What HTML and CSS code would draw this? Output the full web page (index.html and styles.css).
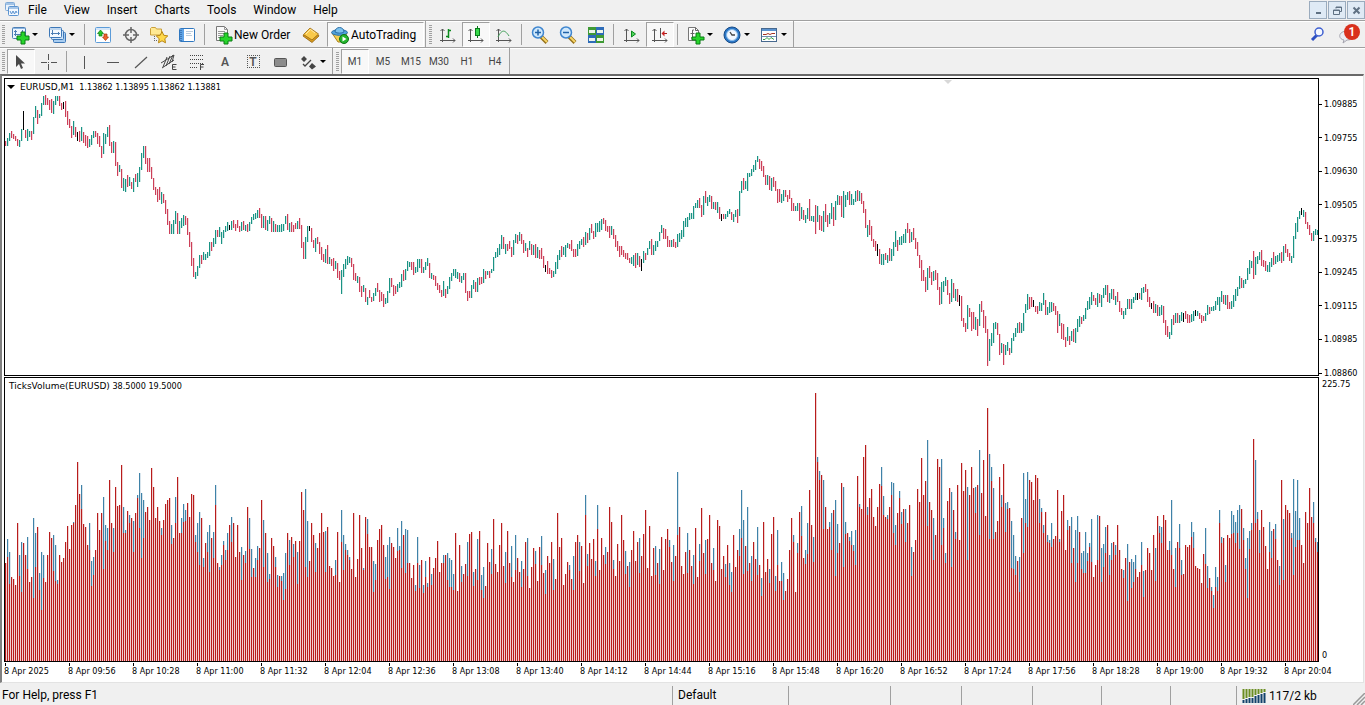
FILE: index.html
```html
<!DOCTYPE html>
<html lang="en">
<head>
  <meta charset="utf-8">
  <title>EURUSD,M1</title>
  <link rel="stylesheet" href="styles.css">
</head>
<body>
  <header class="menubar">
    <svg class="app-icon" width="16" height="16" viewBox="0 0 16 16"><rect x="1.500" y="1.500" width="9" height="8" rx="1" fill="#eaf3fc" stroke="#7fa9d6"/><path d="M2 3h8" stroke="#5b93d0"/><rect x="4.500" y="5.500" width="10" height="9" rx="1" fill="#f4f9ff" stroke="#5b93d0"/><path d="M5 7h9" stroke="#5b93d0"/><path d="M6 10l1.500 3 1.500-3 1.500 3 1.500-3 1 2" fill="none" stroke="#5b93d0"/></svg>
    <nav class="menu">
      <a href="#">File</a>
      <a href="#">View</a>
      <a href="#">Insert</a>
      <a href="#">Charts</a>
      <a href="#">Tools</a>
      <a href="#">Window</a>
      <a href="#">Help</a>
    </nav>
    <div class="window-buttons">
      <button aria-label="Minimize"><svg width="11" height="11" viewBox="0 0 11 11"><path d="M3 8h5" stroke="#5f7183" stroke-width="2"/></svg></button>
      <button aria-label="Restore"><svg width="11" height="11" viewBox="0 0 11 11"><path d="M4 3.500V2h5.500v4.500H8M4 2.500h5.500" fill="none" stroke="#5f7183"/><path d="M1.500 5h6v4.500h-6zM1.500 5.500h6" fill="none" stroke="#5f7183"/></svg></button>
      <button aria-label="Close"><svg width="11" height="11" viewBox="0 0 11 11"><path d="M2.500 2.500l6 6M8.500 2.500l-6 6" stroke="#5f7183" stroke-width="2"/></svg></button>
    </div>
  </header>

  <div class="toolrow">
    <div class="toolbar">
      <span class="grip"></span>
      <button class="drop" aria-label="New chart"><svg width="20" height="20" viewBox="0 0 20 20"><rect x="2.500" y="2.500" width="13" height="11" rx="1" fill="#eef6ff" stroke="#4d7fb5"/><path d="M3 3.500h12" stroke="#8ab4e0"/><path d="M5.500 5v6M4 6.500h3M4 9.500h10M12.500 5v3" stroke="#4d7fb5"/><path d="M11 7h4v4h4v4h-4v4h-4v-4H7v-4h4z" fill="#27d52b" stroke="#0b7d14"/></svg></button>
      <button class="drop" aria-label="Profiles"><svg width="20" height="20" viewBox="0 0 20 20"><rect x="6.500" y="7.500" width="12" height="10" rx="1" fill="#a9cdf0" stroke="#3d78b8"/><rect x="4.500" y="5.500" width="12" height="9" rx="1" fill="#cfe4f8" stroke="#3d78b8"/><rect x="2.500" y="2.500" width="12" height="10" rx="1" fill="#f4faff" stroke="#3d78b8"/><path d="M3 4h11" stroke="#8ab4e0"/><path d="M5.500 5v5M4 8.500h9M11.500 7v3" stroke="#4d7fb5"/></svg></button>
      <span class="sep"></span>
      <button class="tool" aria-label="Market Watch"><svg width="20" height="20" viewBox="0 0 20 20"><rect x="2.500" y="2.500" width="15" height="15" rx="1" fill="#fff" stroke="#5b9bd8"/><path d="M3 4h14" stroke="#a9cdf0"/><path d="M7.500 5l3 3.500H9V11H6V8.500H4.500z" fill="#27c52b" stroke="#0b7d14" stroke-width=".7"/><path d="M12.500 15.500l-3-3.500H11V9h3v3h1.500z" fill="#f0642d" stroke="#a8330a" stroke-width=".7"/></svg></button>
      <button class="tool" aria-label="Data Window"><svg width="20" height="20" viewBox="0 0 20 20"><circle cx="10" cy="10" r="5.500" fill="none" stroke="#666" stroke-width="1.500"/><path d="M10 2v6M10 12v6M2 10h6M12 10h6" stroke="#666" stroke-width="1.500"/></svg></button>
      <button class="tool" aria-label="Navigator"><svg width="20" height="20" viewBox="0 0 20 20"><path d="M1.500 3.500l1-1h4l1 1.500h5v6h-11z" fill="#ffe994" stroke="#caa03a"/><path d="M5.500 11v6M5 15.500h4" stroke="#666" stroke-dasharray="1 1"/><path d="M13 6.500l1.800 3.800 4 .6-3 2.800.7 4.100-3.500-2-3.500 2 .7-4.100-3-2.800 4-.6z" fill="#ffd84a" stroke="#b98612"/></svg></button>
      <button class="tool" aria-label="Terminal"><svg width="20" height="20" viewBox="0 0 20 20"><rect x="2.500" y="3.500" width="15" height="13" rx="1" fill="#fff" stroke="#2f77c0"/><rect x="3" y="4" width="4" height="12" fill="#5fa3e6"/><path d="M4 5v11" stroke="#1d4f8a" stroke-dasharray="1 1"/><path d="M9 6.500h7M9 8.500h5M9 10.500h6" stroke="#bcd" /></svg></button>
      <span class="sep"></span>
      <button class="wide order"><svg width="20" height="20" viewBox="0 0 20 20"><path d="M3.500 1.500h8l3 3v11h-11z" fill="#fafafa" stroke="#777"/><path d="M11.500 1.500v3h3M5 6.500h7M5 8.500h8M5 10.500h5M5 12.500h3" fill="none" stroke="#999"/><path d="M11 8h4v4h4v4h-4v3h-4v-3H7v-4h4z" fill="#27d52b" stroke="#0b7d14"/></svg>New Order</button>
      <button class="tool" aria-label="MetaEditor"><svg width="20" height="20" viewBox="0 0 20 20"><path d="M2 11l9 6.500L18 11l-1-1.500-6 5-8-5z" fill="#d99b1c" stroke="#8f5f0a" stroke-width=".8"/><path d="M2.500 9.500L9 3l8.500 6-6.500 6z" fill="#f9c94a" stroke="#9a6a10" stroke-width=".8"/><path d="M5 9l4.500-4.500L14 8" fill="none" stroke="#ffe9a8"/></svg></button>
      <button class="wide auto pressed"><svg width="20" height="20" viewBox="0 0 20 20"><path d="M2 8h15l-5 9H8z" fill="#f5cf52" stroke="#a98218"/><ellipse cx="9.500" cy="7.500" rx="8" ry="2.800" fill="#4fa2dc" stroke="#2a6ea5"/><path d="M5 7c0-6 9-6 9 0-2 1.500-7 1.500-9 0z" fill="#7cc2ee" stroke="#2a6ea5"/><circle cx="14" cy="14" r="4.500" fill="#24b52c" stroke="#0c7414"/><path d="M12.500 11.500l4 2.500-4 2.500z" fill="#fff"/></svg>AutoTrading</button>
    </div>
    <div class="toolbar">
      <span class="grip"></span>
      <button class="tool" aria-label="Bar Chart"><svg width="20" height="20" viewBox="0 0 20 20"><path d="M4.500 4v13M2 15.500h15M2.500 6l2-2 2 2M15 13.500l2 2-2 2" fill="none" stroke="#555"/><path d="M10.500 4v9M8 11.500h2M11 5.500h2" stroke="#0a8a1c" stroke-width="1.500"/></svg></button>
      <button class="tool pressed" aria-label="Candlesticks"><svg width="20" height="20" viewBox="0 0 20 20"><path d="M4.500 4v13M2 15.500h15M2.500 6l2-2 2 2M15 13.500l2 2-2 2" fill="none" stroke="#555"/><path d="M11.500 1v12" stroke="#0a7a1c"/><rect x="9.500" y="3.500" width="4" height="7" fill="#35d948" stroke="#0a7a1c"/></svg></button>
      <button class="tool" aria-label="Line Chart"><svg width="20" height="20" viewBox="0 0 20 20"><path d="M4.500 4v13M2 15.500h15M2.500 6l2-2 2 2M15 13.500l2 2-2 2" fill="none" stroke="#555"/><path d="M4 12c3-6 6-9 11-1" fill="none" stroke="#3f9e56"/></svg></button>
      <span class="sep"></span>
      <button class="tool" aria-label="Zoom In"><svg width="20" height="20" viewBox="0 0 20 20"><path d="M11 11.500l6 6" stroke="#94701a" stroke-width="4"/><path d="M12 12l5 5" stroke="#f7d566" stroke-width="2"/><circle cx="8" cy="7.500" r="5.500" fill="#cfe8fc" stroke="#3f86cf" stroke-width="1.500"/><path d="M5 7.500h6M8 4.500v6" stroke="#2063a8" stroke-width="1.500"/></svg></button>
      <button class="tool" aria-label="Zoom Out"><svg width="20" height="20" viewBox="0 0 20 20"><path d="M11 11.500l6 6" stroke="#94701a" stroke-width="4"/><path d="M12 12l5 5" stroke="#f7d566" stroke-width="2"/><circle cx="8" cy="7.500" r="5.500" fill="#cfe8fc" stroke="#3f86cf" stroke-width="1.500"/><path d="M5 7.500h6" stroke="#2063a8" stroke-width="1.500"/></svg></button>
      <button class="tool" aria-label="Tile Windows"><svg width="20" height="20" viewBox="0 0 20 20"><rect x="2" y="2" width="8" height="8" fill="#3f9a35"/><rect x="10" y="2" width="8" height="8" fill="#2e6cb8"/><rect x="2" y="10" width="8" height="8" fill="#2e6cb8"/><rect x="10" y="10" width="8" height="8" fill="#3f9a35"/><path d="M3 6.500h6M11 6.500h6M3 14.500h6M11 14.500h6" stroke="#eef6ea" stroke-width="3"/></svg></button>
      <span class="sep"></span>
      <button class="tool" aria-label="Auto Scroll"><svg width="20" height="20" viewBox="0 0 20 20"><path d="M4.500 4v13M2 15.500h15M2.500 6l2-2 2 2M15 13.500l2 2-2 2" fill="none" stroke="#555"/><path d="M9.500 6l4 3-4 3z" fill="#4fd35c" stroke="#0a8a1c"/></svg></button>
      <button class="tool pressed" aria-label="Chart Shift"><svg width="20" height="20" viewBox="0 0 20 20"><path d="M4.500 4v13M2 15.500h15M2.500 6l2-2 2 2M15 13.500l2 2-2 2M10.500 3v10" fill="none" stroke="#555"/><path d="M17 8.500h-4" stroke="#a81c1c"/><path d="M11.500 8.500l3-3v6z" fill="#c22"/></svg></button>
      <span class="sep"></span>
      <button class="drop" aria-label="Indicators"><svg width="20" height="20" viewBox="0 0 20 20"><path d="M3.500 2.500h7l3 3v10h-10z" fill="#fdfdfd" stroke="#777"/><path d="M10.500 2.500v3h3M9 5H7.500v8H6M5.500 8.500h4" fill="none" stroke="#666"/><path d="M11 8h4v4h4v3h-4v4h-4v-4H7v-3h4z" fill="#27d52b" stroke="#0b7d14"/></svg></button>
      <button class="drop" aria-label="Periods"><svg width="20" height="20" viewBox="0 0 20 20"><circle cx="10" cy="10" r="8" fill="#2c78c8" stroke="#174b86"/><circle cx="10" cy="10" r="5.500" fill="#f2f8ff" stroke="#8bbdea"/><path d="M8 7l2 3h3" fill="none" stroke="#444" stroke-width="1.300"/></svg></button>
      <button class="drop" aria-label="Templates"><svg width="20" height="20" viewBox="0 0 20 20"><rect x="2.500" y="3.500" width="15" height="13" fill="#fff" stroke="#47698f"/><path d="M3 5h14" stroke="#5b93d0" stroke-width="2"/><path d="M4 9.500h3l2-1 2 1 2-1h3" fill="none" stroke="#a33222"/><path d="M3 11.500h14" stroke="#6f8db0"/><path d="M4 14.500h2l2-2 2 2 2-2 3 2" fill="none" stroke="#2e9e46"/></svg></button>
    </div>
    <div class="corner">
      <button class="tool" aria-label="Search"><svg width="16" height="16" viewBox="0 0 16 16"><path d="M7 9l-5 5" stroke="#2d4fc2" stroke-width="3"/><circle cx="9" cy="6" r="4" fill="#f4f8ff" stroke="#3f5fd0" stroke-width="1.500"/></svg></button>
      <button class="notify" aria-label="Notifications"><svg width="22" height="20" viewBox="0 0 22 20"><path d="M8 7c-8 1-8 8-2 9l-1 3 4-3c6 0 8-3 7-6z" fill="#ececf2" stroke="#a4a4ae"/></svg><span class="badge">1</span></button>
    </div>
  </div>

  <div class="toolrow">
    <div class="toolbar">
      <span class="grip"></span>
      <button class="tool pressed" aria-label="Cursor"><svg width="20" height="20" viewBox="0 0 20 20"><path d="M5 3v12l3-3 2 5 2-1-2-4.500h4z" fill="#4a4a4a"/></svg></button>
      <button class="tool" aria-label="Crosshair"><svg width="20" height="20" viewBox="0 0 20 20"><path d="M9.500 2v6M9.500 12v6M2 10.500h6M12 10.500h6M9 10.500h1" stroke="#555"/></svg></button>
      <span class="sep"></span>
      <button class="tool" aria-label="Vertical Line"><svg width="20" height="20" viewBox="0 0 20 20"><path d="M9.500 4v13" stroke="#555"/></svg></button>
      <button class="tool" aria-label="Horizontal Line"><svg width="20" height="20" viewBox="0 0 20 20"><path d="M4 10.500h12" stroke="#555"/></svg></button>
      <button class="tool" aria-label="Trendline"><svg width="20" height="20" viewBox="0 0 20 20"><path d="M4 16L16 5" stroke="#555" stroke-width="1.200"/></svg></button>
      <button class="tool" aria-label="Equidistant Channel"><svg width="20" height="20" viewBox="0 0 20 20"><path d="M2 11L15 3M3 16L15 8M4 15L8 5M7 14l4-10M10 12l4-9M13 10l2-7" stroke="#444"/><path d="M17.500 12.500h-4v5h4M13.500 15h3" fill="none" stroke="#444"/></svg></button>
      <button class="tool" aria-label="Fibonacci Retracement"><svg width="20" height="20" viewBox="0 0 20 20"><path d="M3 3.500h13M3 7.500h13M3 11.500h13M3 15.500h8" stroke="#444" stroke-dasharray="1 1"/><path d="M17 12.500h-3.500V18M13.500 15h3" fill="none" stroke="#444"/></svg></button>
      <button class="tool glyph" aria-label="Text">A</button>
      <button class="tool glyph" aria-label="Text Label"><span class="boxed">T</span></button>
      <button class="tool" aria-label="Rectangle"><svg width="20" height="20" viewBox="0 0 20 20"><rect x="3.500" y="6.500" width="12" height="8" rx="1" fill="#8c8c8c" stroke="#555"/></svg></button>
      <button class="drop" aria-label="Arrows"><svg width="20" height="20" viewBox="0 0 20 20"><path d="M6 4l3 3-3 3-3-3zM14 11l4 3.500-4 3-3-3z" fill="#444"/><path d="M5 12l2 2 6-6" fill="none" stroke="#444" stroke-width="1.300"/></svg></button>
    </div>
    <div class="toolbar frames">
      <span class="grip"></span>
      <button class="tool pressed">M1</button>
      <button class="tool">M5</button>
      <button class="tool">M15</button>
      <button class="tool">M30</button>
      <button class="tool">H1</button>
      <button class="tool">H4</button>
    </div>
  </div>

  <main class="chart">
    <section class="pane price">
      <h1 class="caption"><span class="arrow"></span><span class="name">EURUSD,M1</span>&nbsp; 1.13862 1.13895 1.13862 1.13881</h1>
      <span class="shift-mark"></span>
      <svg class="plot" viewBox="0 0 1313 296" preserveAspectRatio="none">
        <g class="glow">
          <use href="#up" x="1"/>
          <use href="#down" x="1"/>
        </g>
        <path id="up" class="up"/>
        <path id="down" class="down"/>
        <path id="flat" class="flat"/>
      </svg>
    </section>
    <ul class="scale prices">
      <li>1.09885</li>
      <li>1.09755</li>
      <li>1.09630</li>
      <li>1.09505</li>
      <li>1.09375</li>
      <li>1.09245</li>
      <li>1.09115</li>
      <li>1.08985</li>
      <li>1.08860</li>
    </ul>
    <section class="pane volume">
      <h2 class="caption"><span class="name">TicksVolume(EURUSD)</span>&nbsp;38.5000 19.5000</h2>
      <svg class="plot" viewBox="0 0 1313 283" preserveAspectRatio="none">
        <g class="glow">
          <use href="#total" x="1"/>
          <use href="#ticks" x="1"/>
        </g>
        <path id="total" class="total"/>
        <path id="ticks" class="ticks"/>
      </svg>
    </section>
    <ul class="scale volumes">
      <li>225.75</li>
      <li>0</li>
    </ul>
    <ul class="times">
      <li>8 Apr 2025</li>
      <li>8 Apr 09:56</li>
      <li>8 Apr 10:28</li>
      <li>8 Apr 11:00</li>
      <li>8 Apr 11:32</li>
      <li>8 Apr 12:04</li>
      <li>8 Apr 12:36</li>
      <li>8 Apr 13:08</li>
      <li>8 Apr 13:40</li>
      <li>8 Apr 14:12</li>
      <li>8 Apr 14:44</li>
      <li>8 Apr 15:16</li>
      <li>8 Apr 15:48</li>
      <li>8 Apr 16:20</li>
      <li>8 Apr 16:52</li>
      <li>8 Apr 17:24</li>
      <li>8 Apr 17:56</li>
      <li>8 Apr 18:28</li>
      <li>8 Apr 19:00</li>
      <li>8 Apr 19:32</li>
      <li>8 Apr 20:04</li>
    </ul>
  </main>

  <footer class="statusbar">
    <span class="help">For Help, press F1</span>
    <span>Default</span>
    <span></span>
    <span></span>
    <span></span>
    <span></span>
    <span></span>
    <span></span>
    <span class="traffic"><svg width="24" height="14" viewBox="0 0 24 14"><path d="M1.500 0v10M4.500 0v9M7.500 0v8M10.500 0v8M13.500 0v6M16.500 0v5M19.500 0v4M22.500 0v3" stroke="#6b8e23" stroke-width="2"/><path d="M1.500 11v3M4.500 10v4M7.500 9v5M10.500 9v5M13.500 7v7M16.500 6v8M19.500 5v9M22.500 4v10" stroke="#12426b" stroke-width="2"/></svg>117/2 kb
      <svg class="resize" width="12" height="12" viewBox="0 0 12 12"><path d="M0 12L12 0M4 12l8-8M8 12l4-4" stroke="#999" stroke-width="1.500"/></svg></span>
  </footer>

  <script src="chart.js"></script>
</body>
</html>
```

FILE: styles.css
```css
* {
  box-sizing: border-box;
}
body {
  margin: 0;
  height: 100vh;
  display: flex;
  flex-direction: column;
  overflow: hidden;
  background-color: #f0f0f0;
  color: #000;
  font-family: Roboto, "Open Sans", sans-serif;
  font-size: 12px;
}
h1, h2, ul {
  margin: 0;
  padding: 0;
  font-weight: normal;
  list-style: none;
}
button {
  margin: 0;
  padding: 0;
  border: 0;
  background: none;
  color: inherit;
  font: inherit;
}
svg {
  display: block;
  flex: none;
}

/* menu */
.menubar {
  display: flex;
  align-items: center;
  height: 20px;
  padding-left: 4px;
}
.menu {
  display: flex;
  flex: 1;
}
.menu a {
  padding: 0 9px 0 8px;
  line-height: 20px;
  color: #000;
  text-decoration: none;
}
.app-icon {
  margin-bottom: 2px;
}
.window-buttons {
  display: flex;
  gap: 1px;
}
.window-buttons button {
  display: grid;
  place-items: center;
  width: 18px;
  height: 18px;
  border: 1px solid #9aabbd;
  background-color: #dfeaf5;
}

/* toolbars */
.toolrow {
  display: flex;
  height: 27px;
  border-top: 1px solid #a0a0a0;
  box-shadow: inset 0 1px #fff;
}
.toolbar {
  display: flex;
  align-items: stretch;
  padding-top: 1px;
  border-right: 1px solid #a0a0a0;
}
.grip {
  width: 3px;
  margin: 3px 2px 3px 3px;
  background: repeating-linear-gradient(#a0a0a0 0 1px, #f0f0f0 1px 2px);
}
.toolbar:first-child .grip {
  margin-left: 2px;
}
.sep {
  width: 8px;
  padding: 2px 0;
}
.sep::before {
  content: "";
  display: block;
  width: 1px;
  height: 100%;
  margin-left: 3px;
  background-color: #a0a0a0;
}
.tool, .drop, .wide {
  display: flex;
  align-items: center;
  justify-content: center;
  width: 28px;
}
.drop {
  justify-content: flex-start;
  width: 37px;
  gap: 2px;
  padding-left: 3px;
}
.drop::after {
  content: "";
  border: 3px solid transparent;
  border-top-color: #000;
  border-bottom: 0;
}
.pressed {
  border: 1px solid #fff;
  border-top-color: #a0a0a0;
  border-left-color: #a0a0a0;
  background-color: #f8f8f8;
}
.wide {
  justify-content: flex-start;
  gap: 1px;
}
.order {
  width: 88px;
  padding-left: 4px;
}
.auto {
  width: 97px;
  margin: 0 1px 0 2px;
  padding-left: 2px;
}
.glyph {
  color: #555;
  font-weight: 600;
}
.boxed {
  width: 13px;
  height: 13px;
  border: 1px dotted #555;
  line-height: 12px;
}
.frames {
  color: #444;
  font-size: 10px;
}
.corner {
  display: flex;
  align-items: center;
  margin-left: auto;
  padding-right: 5px;
}
.notify {
  position: relative;
  margin-left: 6px;
}
.badge {
  position: absolute;
  top: 0;
  right: 0;
  width: 16px;
  height: 16px;
  border-radius: 50%;
  background-color: #d9301c;
  color: #fff;
  font-weight: 600;
  line-height: 16px;
  text-align: center;
}

/* chart window */
.chart {
  flex: 1;
  display: grid;
  grid-template-columns: 1fr 44px;
  grid-template-rows: 298fr 285fr 19px;
  row-gap: 1px;
  min-height: 0;
  margin-right: 1px;
  padding: 2px 0 0 2px;
  border-top: 2px solid #696969;
  border-left: 2px solid #808080;
  border-bottom: 1px solid #e3e3e3;
  border-right: 1px solid #e3e3e3;
  background-color: #fff;
  font-family: "DejaVu Sans Condensed", "DejaVu Sans", sans-serif;
  font-size: 9px;
}
.pane {
  position: relative;
  min-height: 0;
  border: 1px solid #000;
}
.plot {
  width: 100%;
  height: 100%;
  shape-rendering: crispEdges;
}
.up {
  fill: #1a9384;
}
.down {
  fill: #cc3f58;
}
.flat {
  fill: #000;
}
.total {
  fill: #3f82a8;
}
.ticks {
  fill: #b81c1c;
}
.glow {
  opacity: 0.2;
}
.caption {
  position: absolute;
  top: 2px;
  left: 4px;
  display: flex;
  align-items: center;
  font-size: 9px;
  line-height: 12px;
}
.name {
  font-family: "DejaVu Sans", sans-serif;
}
.arrow {
  margin: 0 5px 0 -2px;
  border: 4px solid transparent;
  border-top-color: #000;
  border-bottom: 0;
}
.shift-mark {
  position: absolute;
  top: 1px;
  left: 72%;
  margin-left: -6px;
  border: 4px solid transparent;
  border-top-color: #d8d8d8;
  border-bottom: 0;
}
.scale {
  display: flex;
  flex-direction: column;
  justify-content: space-between;
  line-height: 6px;
}
.prices {
  padding-top: 23px;
}
.prices li {
  display: flex;
  align-items: center;
  gap: 2px;
}
.prices li::before {
  content: "";
  width: 3px;
  height: 1px;
  background-color: #000;
}
.volumes {
  padding: 4px 0 4px 3px;
}
.times {
  display: flex;
  min-width: 0;
  white-space: nowrap;
}
.times li {
  flex: 0 0 calc(100% * 64 / 1315);
  line-height: 11px;
}
.times li::before {
  content: "";
  display: block;
  width: 1px;
  height: 3px;
  margin-left: 1px;
  background-color: #000;
}

/* status bar */
.statusbar {
  display: grid;
  grid-template-columns: 1fr 116px 102px 71px 71px 69px 69px 66px 129px;
  height: 22px;
  padding-top: 3px;
  line-height: 18px;
}
.statusbar > span {
  padding-left: 5px;
  border-left: 1px solid #a0a0a0;
}
.statusbar .help {
  padding-left: 2px;
  border-left: 0;
}
.traffic {
  display: flex;
  align-items: center;
  gap: 3px;
}
.resize {
  align-self: flex-end;
  margin-left: auto;
}
```

FILE: chart.js
```js
// one entry per minute: top, direction (u/d/n), bottom
const bars = `
141d146 138u146 133u141 131d138 134d139 136d141 139d146 140u147 129u141 111n130
130d138 129u141 131u137 131d140 117u134 106u118 110d124 114u118 103u116 96u105
95d105 98d105 100d110 99d113 101u114 96u105 96u101 96d106 103d110 102n109
101d117 111d125 119d128 126d138 121u135 127d137 132n141 131d142 127u141 132d143
135d146 136d148 139u147 135u145 131u138 131d137 133d144 136d147 146d158 133u154
134u144 127u137 125d146 142d153 141u153 142d166 162d176 165u172 169d188 178u191
179u192 175d187 177u186 182d189 178u192 174d182 173u187 167u182 153u170 146u158
146d164 158d172 158d172 167d179 178d190 187d195 189d202 187d200 192u204 194d203
200d214 209d225 221d234 224u234 220u234 211u224 213d234 221u234 218u228 215u226
216d225 218d235 232d247 242d266 258d277 272u279 266u276 255u268 255d264 252u260
254u260 252u258 242u256 242d251 238u247 230u244 230d237 227u237 232u244 230u238
226u232 222u231 225n230 221u230 220d228 224d231 220d228 226d232 222u231 221d230
225u231 224d232 222u231 217u224 214u220 213u219 210u218 208d218 214d228 216u228
216d230 220u231 216u224 218d232 221u232 224d232 225u232 225u232 224u232 224u231
216u224 214d230 223u232 222d232 225d232 223d229 221u229 218d229 225d248 242d259
237u259 226u242 226n231 228d242 240d248 238u252 237d244 242d254 247d260 254d262
249u263 245d264 257u264 259d266 258d271 261u269 263d278 271d280 270u294 264u277
259u269 256u265 257u263 258d267 264d280 273d281 276u283 277d292 286d297 285u292
288d302 297u305 290d298 297d302 293u301 288u296 283d292 290d302 292d301 294d307
298u304 291u303 278u293 278d287 285d296 286d294 284u292 282u288 274u287 270d281
269u280 261u271 262u267 262d270 262d275 267u273 259u272 259u268 259d273 267u273
262u270 258u266 263d278 273u279 275d280 276d286 283d290 285d293 290d297 281u296
289d298 286u294 277u289 273u281 269u276 269u278 272u279 273d282 276u283 273u280
273d293 291d301 291d298 285u298 280u289 282d292 278u292 277d285 277d284 269u283
271d279 271u275 271d278 269u273 257u271 252u258 248u257 244u255 235u249 237d249
244u254 244d251 241d249 247d257 240u255 234u243 235d244 232u241 234d244 240d253
243u251 248d257 241u250 244d255 245u255 244d258 247u258 250d259 248d259 256d268
265n272 261d274 268d274 270d278 271u277 262u274 255u269 250u260 246d257 247u255
245u257 243u248 244d249 240d251 249d257 249d257 244u256 241u249 239u245 237d247
232u245 233d243 228u240 224d233 231d239 223u237 223u232 221u232 219u230 218d224
220d231 226d232 226d238 226u235 229d239 235d247 241d251 246d257 246d255 250d257
253d259 253d260 258d263 257u264 255u266 253d268 253u265 256d267 259n271 251u263
253d260 248u255 241u249 239d255 245u255 241u251 241u247 232u241 225u233 228d239
229d239 236d247 240d247 240u247 239d247 242d248 234u247 233u242 230u239 221u237
218u227 217u227 213u220 213u219 206u219 203u208 200u208 198d208 205d217 196u215
191d203 197u206 195u202 196d209 202u209 202d210 202u213 207d219 214n221 214d219
214u219 211u217 209u214 212d220 214u222 210u217 209d223 191u216 181u193 178d190
181u189 173u191 173u177 169u176 165u172 160u170 156u162 159d169 161d171 166d177
175d185 175u185 176d190 178u191 177d187 181d191 189d203 189d202 194u203 190u201
190d197 195d202 190d199 198d211 203d211 206u211 203u211 203d221 207u219 210d220
215u223 208u219 199d221 216u221 216u222 205d234 206u222 215d230 216d231 211u232
204d222 215d227 213u224 203u219 207d226 201u220 195u205 196d205 196d217 191u218
195u207 192u200 191d205 194u205 199u205 191u202 190d201 191u201 193d204 201d213
209d228 225u237 220d235 226d241 239d247 241d251 244n256 249d264 254u265 254u265
253d260 255u263 248d261 249u261 242u256 231u247 240d251 237u245 236u245 234u243
229u243 223d233 229d243 232u242 228d240 238d249 242d256 255d268 260d281 270d281
277d292 268u290 266d278 272d285 271u281 270d280 273d290 287d305 282u304 281u292
277u286 280d295 293d304 279u302 283d298 289u301 289d302 295n306 296d321 318d327
323d332 305u329 308d317 312d331 312d329 317u330 319d336 304u326 301d312 310d328
316d333 329d366 339u361 333u346 323u343 322u329 323d335 334d355 343u353 344d365
345u355 342u351 348d355 338u353 333u341 328u337 323u333 322d333 323u333 313u331
304u313 294u310 297d309 297d307 300n307 306d312 306d314 302u311 303u311 293u305
300d315 307u315 302u313 302u312 303d311 306d315 311d333 314u326 323d339 324d340
337d347 327u341 336d345 331u341 329d342 328u343 319u332 316u327 317d324 315u321
308u319 301u310 297u309 292u305 295d301 298d305 293u307 294d303 295u307 288u298
285u295 285d302 293u303 289u299 289d300 296u305 292d302 301d312 308d315 311u319
308u315 299u309 299d309 299u309 297u303 293u300 293n300 293d299 288u300 287u293
284d292 289d302 297d307 303n309 301d313 304u313 305d316 307u316 305u315 306d323
320d335 326d337 332u339 319u335 315d325 313u323 313d323 315u323 312u321 313n322
311d319 314d323 315d323 314u322 311u321 310n316 311u316 313d319 315d323 316d321
313u321 305u315 307d314 307u311 306u311 301u310 297u305 297u311 291u302 295d304
295u305 295d309 302d309 301u309 295u307 289u301 287u296 276u289 278d288 280u288
279u284 268u280 260u274 261u268 251d279 257u275 256u264 252u260 250d266 260d267
261d271 265u272 262u272 258u267 252d265 256u264 255u262 253u261 252d263 246u261
244d253 249d257 253d261 256u263 236u258 223u239 217u232 211u219 208n215 210u217
212d224 222d229 225d235 233d241 231u241 229u235 230u235
`.trim().split(/\s+/);

// column heights: ticks, or ticks/total where the two differ
const volumes = `
97 103/121 76/108 83 81 75 137 84/105 68/118 117
105 91/123 78 83 62/142 93/127 133 70/87 50/108 82/105
78 105 128 122 89/125 79/115 76/80 105 98 102
118 134 111 135 137/138 155 198 166 151/175 136
133 115 110/137 74/99 85/103 110 147 130 147 91/163
119/135 110/132 180 137 108/132 173 154 155 195 127/153
127/130 149 137/145 142 108/139 147 162/165 132/187 102/167 122/160
148 153 140 192 173 142 153 139 125/132 140
156 160 162 116/135 122 137/163 183 127 127/142 138/156
139/150 157 143 166 165 118/125 108/137 95/148 142 93/102
117 108/128 88/135 122 102/128 155/175 97 90/93 95/105 115/119
100/110 110/127 135 118/143 137 103 135 108 80/113 105
97/109 153 111/142 83/111 92 83/102 100/114 112 160 93/140
127 78/107 81/86 122 114 93/103 73/85 84 79/84 60/87
71/107 127 95/120 123 103/116 119 76/108 119 168 150
93/171 83/139 99 137 125 88/117 112 127 147 128
88/129 133 94 92 84 85/100 128 78 118/150 90/125
110/116 105/110 100/103 91 147 83 101 145 112 90/92
143 126/141 113 113 68/99 80/96 120 131 135 115
81/103 83/115 71/123 117 113 102 109/132 110/114 92/139 125
87/131 97/130 97 82 95 69/75 97/123 72/95 100 67/75
83/99 73/77 103 75/86 92 102 119 88 97 97/105
105 80/107 73/102 73/100 70/86 127 69 115 78/94 86
96 84/118 126 128 74/88 91 80/121 129 70/85 62/93
74 117 98 86/111 141 96 88 115 137 94
77/108 129 97 83/114 78 90/125 102 88 73/99 91
118 84/122 72 93 112 96/109 79 113 95/124 87
66/90 104 97 118 70/101 81 147 113 122 75
86 98 90/95 81 70/104 118 125 89/118 114 77
145/165 94/106 117 101 121 84/99 131/155 90 122 105
96/113 108 153 138 91/100 84 116 99 145 120
86/109 94 73/98 110 129 99 118 87/122 104 126
150 92 134 84 112 85/114 97 76/111 123 90
121 131 113/120 98 79/115 104 125/188 133 94 86
108 87/127 110 94 76/105 132 83 99/116 152 107
86/120 121 145 97 90/112 79 140 134 91 104
83/96 115 75/97 68/88 125 93 110 104/131 122/170 86/140
114 89/153 97 79/104 118 101 85/133 95 64/82 138
88 101 77/91 126 143 69/84 95/130 79 79/98 60/87
69 81 110 142 118/125 68 107/117 148 124/154 102
96/110 106/137 170 135 98/123 267 198/203 180/189 185 131/180
153 131 133/138 110/147 150 84/160 107/136 117 177 93/173
126/138 127 119/123 115/129 109/115 95/130 184 153/156 151 203
215 145/153 162 171 143 134 153 176 174/193 145/164
143 141/145 153 165/178 127/177 115/135 147 162/169 136/148 151
118/151 137 155 84/113 108 120 171 158 202 165
179 134/220 158 150 100/142 125 201 193 115/201 132/142
97/107 159 172 93/168 150 121/128 175 120 197 169
190 100/173 165 193 172 147/173 175 125/210 167 200
144 252 121/206 179/193 121/172 128 139 183 153/165 196
128/157 151/158 152 92/139 91/125 85/104 99 68/103 142 107/187
137/161 133/188 180 178 160 185 182 137/161 148/152 127/135
148 118/125 117/120 113/137 121 124 170 118/121 149 165
110 130/140 134 97/143 112 78/130 97/144 128 91/107 87/109
87/128 99/107 113/117 98/141 83 95 100/145 144 78/112 93/116
107/133 135 85/105 100/117 118 105/115 135 110 91 82/90
102 59/116 98 72/101 78/98 91/105 83 88 95/118 63/89
90 112 107 90 125 79/112 144 127/134 117/133 145
140 110 110/119 105/160 91 73/112 118 112/136 85/100 86
115 113 115 123/138 112/128 94 92 91 77 106
96/132 72/94 82 69/73 52/65 73/93 69/83 137/150 117/123 122
78/95 125 122 126/149 127/145 117/138 127/150 111/155 151 120/132
91/102 62/122 111/129 130/137 221 137/200 141/148 107/130 150 133
114 91 108/138 102/129 131 121/136 100 75/94 180 80/141
155 150 147 122/127 85/181 113/149 120/180 120/142 115 97
148 137 172 143 137/158 118/122 108/118
`.trim().split(/\s+/);

const step = 2;
const paneTop = 79;
const base = 283;

function column(x, top, bottom) {
  return `M${x} ${top}h1V${bottom}h-1z`;
}

const columns = { u: "", d: "", n: "" };
bars.forEach((bar, i) => {
  const [, top, dir, bottom] = bar.match(/(\d+)([udn])(\d+)/);
  columns[dir] += column(i * step, top - paneTop, bottom - paneTop);
});
document.getElementById("up").setAttribute("d", columns.u);
document.getElementById("down").setAttribute("d", columns.d);
document.getElementById("flat").setAttribute("d", columns.n);

let ticks = "";
let total = "";
volumes.forEach((entry, i) => {
  const [low, high] = entry.split("/");
  ticks += column(i * step, base - low - 1, base);
  if (high) {
    total += column(i * step, base - high - 1, base - low - 1);
  }
});
document.getElementById("ticks").setAttribute("d", ticks);
document.getElementById("total").setAttribute("d", total);
```
